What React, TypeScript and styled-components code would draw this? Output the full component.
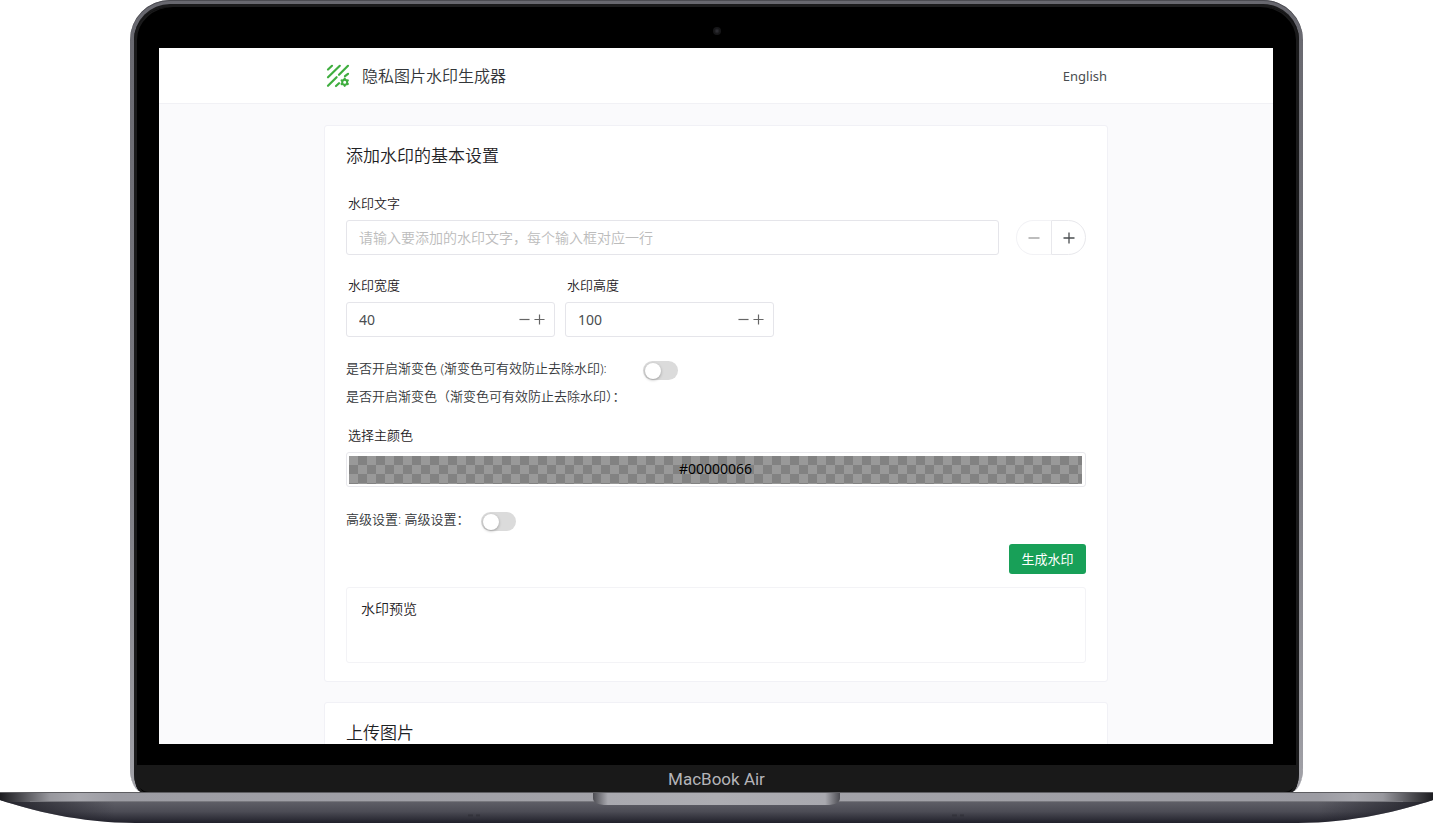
import React, { useState } from "react";
import styled, { createGlobalStyle, css } from "styled-components";

const GlobalStyle = createGlobalStyle`
  *, *::before, *::after { box-sizing: border-box; }
  body {
    margin: 0;
    background: #fff;
    color: #1f2225;
    font: 350 14px/22px "Noto Sans", "Noto Sans CJK SC", sans-serif;
  }
  button, input { font: inherit; color: inherit; }
`;

const Device = styled.div`
  display: flex;
  flex-direction: column;
  height: 100vh;
  overflow: hidden;
`;

const Lid = styled.div`
  flex: 1;
  min-height: 0;
  display: flex;
  margin: 0 130px;
  padding: 4px 4px 0;
  border-radius: 40px 40px 12px 12px / 40px 40px 24px 24px;
  background: linear-gradient(#68686f, #7c7c83 60%, #a2a2a8);
  box-shadow: inset 0 1px 0 #4b4b51;
`;

const Bezel = styled.div`
  flex: 1;
  min-width: 0;
  display: flex;
  flex-direction: column;
  padding: 0 3px;
  border-top: 3px solid #1a1a1b;
  border-radius: 36px 36px 8px 8px / 36px 36px 20px 20px;
  background: #000;
  box-shadow: inset 3px 0 0 #1a1a1b, inset -3px 0 0 #1a1a1b;
`;

const CameraBar = styled.div`
  height: 41px;
  display: flex;
  align-items: center;
  justify-content: center;
  padding-top: 7px;
`;

const Camera = styled.i`
  width: 8px;
  height: 8px;
  border-radius: 50%;
  background: radial-gradient(#34343a, #161618 50%);
`;

const Screen = styled.div`
  flex: 1;
  min-height: 0;
  margin: 0 23px 21px 22px;
  overflow: hidden;
  background: #fafafc;
`;

const Chin = styled.div`
  height: 27px;
  border-radius: 0 0 12px 12px;
  background: #191919;
  color: #b4b4b8;
  font: 400 17px/28px Roboto, sans-serif;
  text-align: center;
`;

const BaseArt = styled.svg`
  display: block;
  flex: none;
  width: 100%;
  height: 31px;
`;

const Header = styled.header`
  height: 56px;
  display: flex;
  background: #fff;
  border-bottom: 1px solid #f1f1f5;
`;

const HeaderInner = styled.div`
  flex: 1;
  max-width: 782px;
  margin: 0 auto;
  display: flex;
  align-items: center;
  justify-content: space-between;
`;

const Brand = styled.a`
  display: flex;
  align-items: center;
  gap: 12px;
  padding-left: 1px;
  color: #333639;
  font-size: 16px;
  text-decoration: none;
`;

const TextButton = styled.button`
  padding: 0;
  border: 0;
  background: none;
  color: #4a4d50;
  font-size: 13px;
  font-weight: 400;
`;

const Main = styled.main`
  max-width: 784px;
  margin: 0 auto;
  padding-top: 21px;
  display: flex;
  flex-direction: column;
  gap: 20px;
`;

const Card = styled.section`
  padding: 18px 21px;
  border: 1px solid #f1f1f6;
  border-radius: 3px;
  background: #fff;
`;

const CardTitle = styled.h2`
  margin: 0 0 26px;
  font-size: 17px;
  line-height: 24px;
  font-weight: 350;
`;

const Row = styled.div<{ $gap: number }>`
  display: flex;
  align-items: flex-end;
  gap: ${(p) => p.$gap}px;
`;

const SettingRows = styled.div`
  display: flex;
  flex-direction: column;
  gap: 21px;
  margin-bottom: 17px;
`;

const Field = styled.div<{ $width?: number }>`
  display: flex;
  flex-direction: column;
  min-width: 0;
  ${(p) => (p.$width ? css`width: ${p.$width}px;` : css`flex: 1;`)}
`;

const FieldLabel = styled.label`
  height: 26px;
  padding: 0 2px;
  font-size: 13px;
  line-height: 18px;
`;

const InputBox = styled.div`
  height: 35px;
  display: flex;
  align-items: center;
  padding: 0 7px 0 12px;
  border: 1px solid #e5e5ea;
  border-radius: 3px;
`;

const TextInput = styled.input`
  flex: 1;
  min-width: 0;
  padding: 0;
  border: 0;
  outline: 0;
  background: none;
  color: #4a4d50;
  font-weight: 400;
  &::placeholder { color: #bcbcbc; opacity: 1; font-weight: 350; }
`;

const StepButton = styled.button`
  display: flex;
  padding: 0 2px;
  border: 0;
  background: none;
  color: #666;
`;

const Pill = styled.div`
  display: flex;
  height: 35px;
`;

const PillButton = styled.button<{ $side: "left" | "right" }>`
  width: 35px;
  display: flex;
  align-items: center;
  justify-content: center;
  padding: 0;
  background: #fff;
  border: 1px solid #e8e8ec;
  color: #4a4d50;
  ${(p) =>
    p.$side === "left"
      ? css`border-radius: 18px 0 0 18px; border-right: 0;`
      : css`border-radius: 0 18px 18px 0;`}
  &:disabled { border-color: #f2f2f5; color: #999; }
`;

const SwitchLine = styled.div<{ $gap: number }>`
  display: flex;
  gap: ${(p) => p.$gap}px;
  color: #333639;
  font-size: 13px;
  line-height: 28px;
`;

const SwitchText = styled.label`
  white-space: pre-line;
`;

const SwitchInput = styled.input`
  appearance: none;
  flex: none;
  width: 35px;
  height: 19px;
  margin: 7px 0 0;
  border-radius: 10px;
  background: #dbdbdb;
  display: flex;
  align-items: center;
  padding: 0 2px;
  &::before {
    content: "";
    width: 16px;
    height: 16px;
    border-radius: 50%;
    background: #fff;
    box-shadow: 0 1px 3px rgba(0, 0, 0, 0.3);
  }
  &:checked { background: #18a058; justify-content: flex-end; }
`;

const ColorField = styled(Field)`
  margin: 16px 0 18px;
`;

const ColorBox = styled.div`
  height: 35px;
  display: flex;
  padding: 3px 3px 2px 2px;
  border: 1px solid #e8e8ec;
  border-radius: 3px;
`;

const ColorButton = styled.button`
  flex: 1;
  padding: 0 0 3px;
  border: 0;
  color: #000;
  font-weight: 400;
  line-height: 20px;
  background: repeating-conic-gradient(#828282 0 25%, #999 0 50%) 0 0 / 18px 18px;
`;

const Actions = styled.div`
  display: flex;
  justify-content: flex-end;
  margin: 11px 0 13px;
`;

const PrimaryButton = styled.button`
  height: 30px;
  width: 77px;
  padding: 0;
  border: 0;
  border-radius: 3px;
  background: #18a058;
  color: #fff;
  font-size: 13px;
  font-weight: 400;
`;

const Preview = styled.div`
  height: 76px;
  padding: 10px 14px;
  border: 1px solid #f3f3f6;
  border-radius: 3px;
`;

const Logo = () => (
  <svg width="24" height="24" viewBox="0 0 24 24" fill="none" stroke="#3fae3f" strokeWidth="2.2" strokeLinecap="round" aria-hidden="true">
    <path d="M2 5.5 6 1.8M2 13.3 13.8 1.8M2 21.8 10.6 13.2M13 10.8 22 1.8M10 22 13 19.2M19 12.2 22 9.8" />
    <circle cx="18.7" cy="18.2" r="2.5" strokeWidth="2" />
    <path strokeWidth="2.2" d="M18.7 14.6v.3M18.7 21.5v.3M15.6 16.4l.3.2M21.5 19.8l.3.2M15.6 20l.3-.2M21.5 16.6l.3-.2" />
  </svg>
);

const Minus = ({ size = 12 }: { size?: number }) => (
  <svg width={size} height={size} viewBox="0 0 12 12" stroke="currentColor" strokeWidth="1.3" aria-hidden="true">
    <path d="M.5 6h11" />
  </svg>
);

const Plus = ({ size = 12 }: { size?: number }) => (
  <svg width={size} height={size} viewBox="0 0 12 12" stroke="currentColor" strokeWidth="1.3" aria-hidden="true">
    <path d="M.5 6h11M6 .5v11" />
  </svg>
);

const LaptopBase = () => (
  <BaseArt viewBox="0 0 1433 31" preserveAspectRatio="none" aria-hidden="true">
    <defs>
      <linearGradient id="under" x1="0" y1="0" x2="0" y2="1">
        <stop offset="0" stopColor="#62626a" />
        <stop offset=".5" stopColor="#4c4c55" />
        <stop offset="1" stopColor="#20202a" />
      </linearGradient>
      <linearGradient id="deck">
        <stop offset="0" stopColor="#1c1c20" />
        <stop offset=".014" stopColor="#4a4a4f" />
        <stop offset=".035" stopColor="#98989e" />
        <stop offset=".055" stopColor="#a8a8ae" />
        <stop offset=".08" stopColor="#9c9ca3" />
        <stop offset=".5" stopColor="#a4a4aa" />
        <stop offset=".92" stopColor="#9c9ca3" />
        <stop offset=".945" stopColor="#a8a8ae" />
        <stop offset=".965" stopColor="#98989e" />
        <stop offset=".986" stopColor="#4a4a4f" />
        <stop offset="1" stopColor="#1c1c20" />
      </linearGradient>
      <linearGradient id="notch">
        <stop offset="0" stopColor="#4c4c52" />
        <stop offset=".06" stopColor="#a9a9af" />
        <stop offset=".5" stopColor="#adadb2" />
        <stop offset=".94" stopColor="#a9a9af" />
        <stop offset="1" stopColor="#4c4c52" />
      </linearGradient>
      <linearGradient id="ends">
        <stop offset="0" stopColor="#14141c" stopOpacity=".8" />
        <stop offset=".08" stopColor="#14141c" stopOpacity="0" />
        <stop offset=".92" stopColor="#14141c" stopOpacity="0" />
        <stop offset="1" stopColor="#14141c" stopOpacity=".8" />
      </linearGradient>
    </defs>
    <path d="M0 8C30 18 80 31 135 31H1298C1353 31 1403 18 1433 8Z" fill="url(#under)" />
    <path d="M0 8C30 18 80 31 135 31H1298C1353 31 1403 18 1433 8Z" fill="url(#ends)" />
    <path d="M0 0H1433V8L1424 10H9L0 8Z" fill="url(#deck)" />
    <path d="M0 .5H1433" stroke="#5e5e62" />
    <path d="M30 9.5H1403" stroke="#77777d" />
    <path d="M593 1H840V6Q840 13 826 13H607Q593 13 593 6Z" fill="url(#notch)" />
    <path d="M468 23.5h5M476 23.5h4M952 23.5h5M960 23.5h4" stroke="#33333b" strokeWidth="2" />
  </BaseArt>
);

interface NumberFieldProps {
  id: string;
  label: string;
  initial: number;
}

const NumberField = ({ id, label, initial }: NumberFieldProps) => {
  const [value, setValue] = useState(initial);
  return (
    <Field $width={209}>
      <FieldLabel htmlFor={id}>{label}</FieldLabel>
      <InputBox>
        <TextInput id={id} inputMode="numeric" value={value} onChange={(e) => setValue(Number(e.target.value) || 0)} />
        <StepButton type="button" aria-label="-" onClick={() => setValue(value - 1)}><Minus size={11} /></StepButton>
        <StepButton type="button" aria-label="+" onClick={() => setValue(value + 1)}><Plus size={11} /></StepButton>
      </InputBox>
    </Field>
  );
};

export default function App() {
  return (
    <>
      <GlobalStyle />
      <Device>
        <Lid>
          <Bezel>
            <CameraBar><Camera /></CameraBar>
            <Screen>
              <Header>
                <HeaderInner>
                  <Brand href="#"><Logo />隐私图片水印生成器</Brand>
                  <TextButton type="button">English</TextButton>
                </HeaderInner>
              </Header>
              <Main>
                <Card>
                  <CardTitle>添加水印的基本设置</CardTitle>
                  <SettingRows>
                    <Row $gap={17}>
                      <Field>
                        <FieldLabel htmlFor="text">水印文字</FieldLabel>
                        <InputBox>
                          <TextInput id="text" placeholder="请输入要添加的水印文字，每个输入框对应一行" />
                        </InputBox>
                      </Field>
                      <Pill>
                        <PillButton type="button" $side="left" aria-label="-" disabled><Minus /></PillButton>
                        <PillButton type="button" $side="right" aria-label="+"><Plus /></PillButton>
                      </Pill>
                    </Row>
                    <Row $gap={10}>
                      <NumberField id="width" label="水印宽度" initial={40} />
                      <NumberField id="height" label="水印高度" initial={100} />
                    </Row>
                  </SettingRows>
                  <SwitchLine $gap={17}>
                    <SwitchText htmlFor="gradient">
                      {"是否开启渐变色 (渐变色可有效防止去除水印):\n是否开启渐变色（渐变色可有效防止去除水印）："}
                    </SwitchText>
                    <SwitchInput id="gradient" type="checkbox" role="switch" />
                  </SwitchLine>
                  <ColorField>
                    <FieldLabel htmlFor="color">选择主颜色</FieldLabel>
                    <ColorBox><ColorButton id="color" type="button">#00000066</ColorButton></ColorBox>
                  </ColorField>
                  <SwitchLine $gap={11}>
                    <SwitchText htmlFor="advanced">高级设置: 高级设置：</SwitchText>
                    <SwitchInput id="advanced" type="checkbox" role="switch" />
                  </SwitchLine>
                  <Actions><PrimaryButton type="button">生成水印</PrimaryButton></Actions>
                  <Preview>水印预览</Preview>
                </Card>
                <Card>
                  <CardTitle>上传图片</CardTitle>
                </Card>
              </Main>
            </Screen>
            <Chin>MacBook Air</Chin>
          </Bezel>
        </Lid>
        <LaptopBase />
      </Device>
    </>
  );
}
